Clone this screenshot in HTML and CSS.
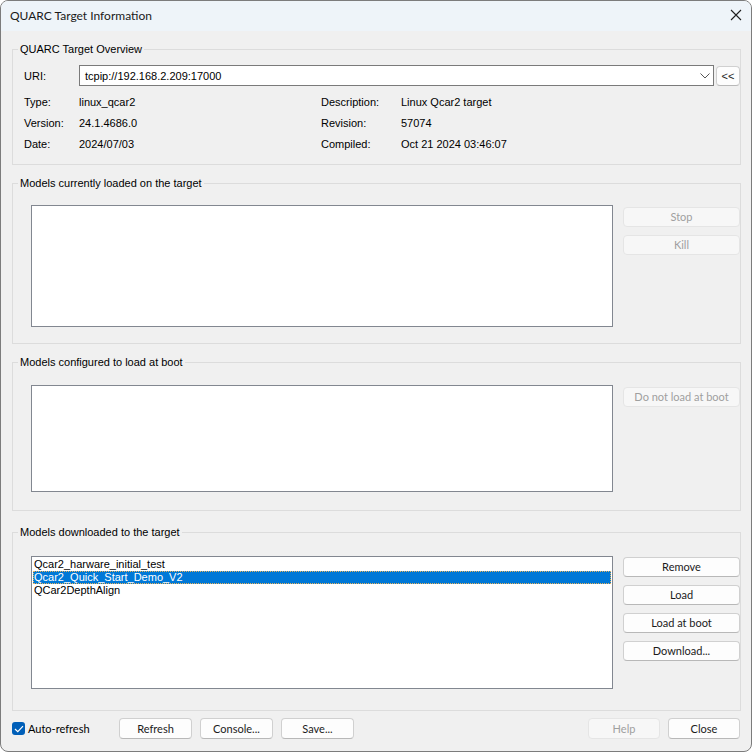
FILE: index.html
```html
<!DOCTYPE html>
<html lang="en">
<head>
    <meta charset="UTF-8">
    <title>QUARC Target Information</title>
    <link rel="stylesheet" href="styles.css">
</head>
<body>
    <div class="window">
        <div class="titlebar">
            <span class="title">QUARC Target Information</span>
            <svg class="close-x" width="12" height="12" viewBox="0 0 12 12">
                <path d="M1 1 L11 11 M11 1 L1 11" stroke="#1f1f1f" stroke-width="1.1" fill="none"/>
            </svg>
        </div>

        <div class="client">
            <fieldset class="group overview">
                <legend>QUARC Target Overview</legend>
                <div class="overview-body">
                    <div class="uri-row">
                        <span class="lbl">URI:</span>
                        <div class="combo">
                            <span>tcpip://192.168.2.209:17000</span>
                            <svg width="10" height="6" viewBox="0 0 10 6">
                                <path d="M0.5 0.5 L5 5 L9.5 0.5" stroke="#555" stroke-width="1" fill="none"/>
                            </svg>
                        </div>
                        <button class="btn tiny">&lt;&lt;</button>
                    </div>
                    <div class="info-grid">
                        <span>Type:</span><span>linux_qcar2</span><span>Description:</span><span>Linux Qcar2 target</span>
                        <span>Version:</span><span>24.1.4686.0</span><span>Revision:</span><span>57074</span>
                        <span>Date:</span><span>2024/07/03</span><span>Compiled:</span><span>Oct 21 2024 03:46:07</span>
                    </div>
                </div>
            </fieldset>

            <fieldset class="group loaded">
                <legend>Models currently loaded on the target</legend>
                <div class="group-body">
                    <div class="listbox"></div>
                    <div class="side">
                        <button class="btn" disabled>Stop</button>
                        <button class="btn" disabled>Kill</button>
                    </div>
                </div>
            </fieldset>

            <fieldset class="group boot">
                <legend>Models configured to load at boot</legend>
                <div class="group-body">
                    <div class="listbox"></div>
                    <div class="side">
                        <button class="btn" disabled>Do not load at boot</button>
                    </div>
                </div>
            </fieldset>

            <fieldset class="group downloaded">
                <legend>Models downloaded to the target</legend>
                <div class="group-body">
                    <div class="listbox">
                        <div class="item">Qcar2_harware_initial_test</div>
                        <div class="item selected">Qcar2_Quick_Start_Demo_V2</div>
                        <div class="item">QCar2DepthAlign</div>
                    </div>
                    <div class="side">
                        <button class="btn">Remove</button>
                        <button class="btn">Load</button>
                        <button class="btn">Load at boot</button>
                        <button class="btn">Download...</button>
                    </div>
                </div>
            </fieldset>

            <div class="footer">
                <label class="check">
                    <span class="box">
                        <svg width="10" height="8" viewBox="0 0 10 8">
                            <path d="M1 4 L3.8 6.6 L9 1.2" stroke="#fff" stroke-width="1.2" fill="none"/>
                        </svg>
                    </span>
                    Auto-refresh
                </label>
                <div class="btn-group left">
                    <button class="btn">Refresh</button>
                    <button class="btn">Console...</button>
                    <button class="btn">Save...</button>
                </div>
                <div class="btn-group right">
                    <button class="btn" disabled>Help</button>
                    <button class="btn">Close</button>
                </div>
            </div>
        </div>
    </div>
</body>
</html>
```

FILE: styles.css
```css
body {
    margin: 0;
    background: #ffffff;
    font-family: "Liberation Sans", Arial, sans-serif;
    font-size: 11px;
    color: #000;
}
.window {
    width: 752px;
    height: 752px;
    box-sizing: border-box;
    border: 1px solid #7c7c7c;
    border-radius: 8px;
    background: #f0f0f0;
    overflow: hidden;
}
.titlebar {
    height: 30px;
    box-sizing: border-box;
    background: #eef4f9;
    display: flex;
    align-items: center;
    justify-content: space-between;
    padding: 0 9px 2px 9px;
}
.title {
    font-family: Lato, sans-serif;
    font-size: 12px;
    color: #1a1a1a;
}
.client {
    padding-top: 12px;
}

/* group boxes */
.group {
    margin: 0 10px 0 11px;
    padding: 0;
    border: 1px solid #dcdcdc;
    min-inline-size: 0;
}
.group legend {
    margin-left: 5px;
    padding: 0 2px;
    line-height: 13px;
    font-size: 11px;
}
.loaded { margin-top: 12px; }
.boot { margin-top: 12px; }
.downloaded { margin-top: 15px; }

.overview-body {
    padding: 9px 0 10px 11px;
}
.uri-row {
    display: flex;
    align-items: center;
    height: 21px;
}
.lbl {
    width: 55px;
}
.combo {
    height: 19px;
    width: 625px;
    border: 1px solid #7a7a7a;
    background: #fff;
    display: flex;
    align-items: center;
    justify-content: space-between;
    padding: 0 3px 0 5px;
    box-sizing: content-box;
}
.btn.tiny {
    width: 24px;
    height: 20px;
    margin-left: 2px;
    padding: 0;
    font-family: "Liberation Sans", Arial, sans-serif;
    font-size: 11px;
}
.info-grid {
    margin-top: 5px;
    display: grid;
    grid-template-columns: 55px 242px 80px 1fr;
    grid-auto-rows: 21px;
    align-items: center;
}

.group-body {
    display: flex;
    padding-left: 18px;
}
.loaded .group-body { padding-top: 15px; padding-bottom: 16px; }
.boot .group-body { padding-top: 16px; padding-bottom: 18px; }
.downloaded .group-body { padding-top: 17px; padding-bottom: 21px; }

.listbox {
    width: 580px;
    border: 1px solid #828790;
    background: #fff;
    padding-top: 1px;
    box-sizing: content-box;
}
.loaded .listbox { height: 119px; }
.boot .listbox { height: 104px; }
.downloaded .listbox { height: 130px; }

.item {
    height: 13px;
    line-height: 13px;
    padding-left: 1px;
    margin: 0 1px;
    white-space: nowrap;
}
.item.selected {
    background: #0078d7;
    color: #fff;
    outline: 1px dotted #e8b25a;
    outline-offset: -1px;
}

.side {
    margin-left: 10px;
    width: 117px;
    padding-top: 2px;
    display: flex;
    flex-direction: column;
    gap: 8px;
}
.downloaded .side {
    padding-top: 1px;
}

/* push buttons */
.btn {
    font-family: Lato, sans-serif;
    font-size: 11px;
    height: 21px;
    padding: 0;
    background: #fdfdfd;
    border: 1px solid #d0d0d0;
    border-bottom-color: #b8b8b8;
    border-radius: 4px;
    color: #1b1b1b;
    line-height: 18px;
}
.side .btn {
    width: 117px;
    height: 20px;
}
.btn:disabled {
    background: #f7f7f7;
    border-color: #e5e5e5;
    color: #9f9f9f;
}

.footer {
    margin-top: 7px;
    height: 21px;
    display: flex;
    align-items: center;
    padding: 0 11px;
}
.check {
    display: flex;
    align-items: center;
    font-family: Lato, sans-serif;
    font-size: 11px;
    width: 107px;
}
.box {
    width: 13px;
    height: 13px;
    background: #005fb8;
    border-radius: 3px;
    display: flex;
    align-items: center;
    justify-content: center;
    margin-right: 3px;
}
.btn-group {
    display: flex;
    gap: 8px;
}
.btn-group .btn {
    width: 73px;
}
.btn-group.right {
    margin-left: auto;
}
.btn-group.right .btn {
    width: 72px;
}
```
